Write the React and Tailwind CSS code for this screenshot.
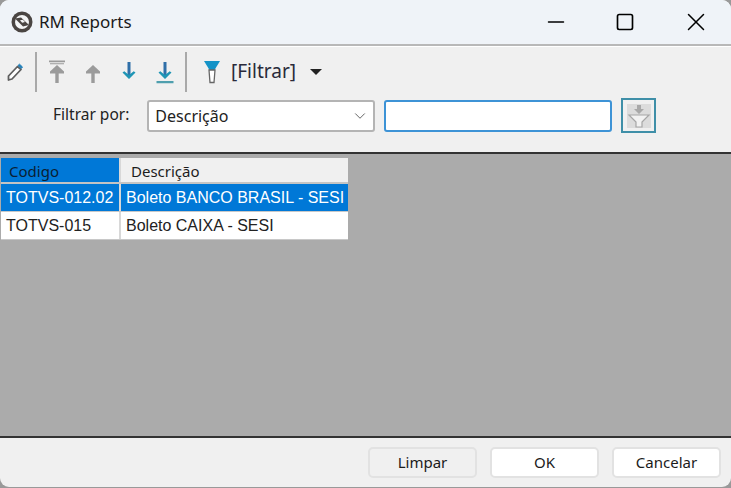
import { ChevronDown, Minus, Square, X } from 'lucide-react';

const SANS = "font-['Noto_Sans',sans-serif]";

const GrayArrow = ({ bar }) => (
  <svg width="20" height="24" viewBox="0 0 20 24" fill="#9b9b9b">
    {bar && <path d="M2 0.500h16v1.800H2zM3 3.200h14v1H3z" />}
    <path d="M8.300 12h3.400v11H8.300z" />
    <path d="M10 5l7 6.500v2H3v-2z" />
  </svg>
);

const BlueArrow = ({ bar }) => (
  <svg width="20" height="24" viewBox="0 0 20 24">
    <path d="M8.500 2h3v13h-3z" fill="#2f6fa8" />
    <path d="M3.500 12.500l6.500 6.500 6.500-6.500-1.800-1.200-4.700 3.800-4.700-3.800z" fill="#1f95b5" />
    {bar && <path d="M1.500 21h17v2.200h-17z" fill="#4f9fae" />}
  </svg>
);

const Logo = () => (
  <svg width="22" height="22" viewBox="0 0 22 22">
    <circle cx="11" cy="11" r="10.500" fill="#4a4543" />
    <circle cx="11" cy="11" r="7" fill="#f4f5f6" />
    <path d="M4 7.500l6-1 8 7.500-6 1.500z" fill="#4a4543" />
    <path d="M9 9.200l2.800-0.500 2.200 2.300-2.800 0.700z" fill="#f4f5f6" />
  </svg>
);

const Pencil = () => (
  <svg width="18" height="20" viewBox="0 0 18 20" fill="none">
    <path d="M2.500 14L11.500 4.500l3.500 3L6 17l-3.500 1z" fill="#fff" stroke="#5f5f5f" strokeWidth="1.800" strokeLinejoin="round" />
    <path d="M12 3.500l1.500-1.300 3 2.800-1.300 1.500z" fill="#2280ba" stroke="#2280ba" />
  </svg>
);

const Funnel = () => (
  <svg width="18" height="24" viewBox="0 0 18 24">
    <path d="M1 1h16l-5.500 9H6.500z" fill="#1593c7" />
    <path d="M6 10h6l-1 12.500H7z" fill="#fff" stroke="#666" strokeWidth="1.300" />
  </svg>
);

const FilterDown = () => (
  <svg width="24" height="24" viewBox="0 0 24 24">
    <rect width="24" height="24" fill="#dcdcdc" />
    <path d="M10 1h4v4h3l-5 5-5-5h3z" fill="#a8a8a8" />
    <path d="M2 11h20l-7 7v5H9v-5z" fill="#f2f2f2" stroke="#a6a6a6" strokeWidth="1.200" />
  </svg>
);

const Divider = () => <div className="w-0.5 h-10 bg-[#a9a9a9]" />;

const FooterButton = ({ children, muted }) => (
  <button className={`w-[109px] h-[31px] rounded-[5px] border-2 border-[#e2e2e2] text-[15px] text-[#1b1b1b] ${muted ? 'bg-[#f0f0f0]' : 'bg-white'}`}>
    {children}
  </button>
);

const Row = ({ code, name, selected }) => (
  <div className={`flex h-7 border-b border-[#c8c8c8] text-[16px] leading-7 font-['Liberation_Sans',sans-serif] ${selected ? 'bg-[#0078d7] text-white' : 'bg-white text-[#222]'}`}>
    <div className="w-[120px] pl-[5px] border-r-2 border-[#d8d8d8] whitespace-nowrap">{code}</div>
    <div className="w-[227px] pl-[5px] whitespace-nowrap">{name}</div>
  </div>
);

export default function App() {
  return (
    <div className={`w-[731px] h-[488px] overflow-hidden bg-[#999] ${SANS}`}>
      <div className="h-[487px] flex flex-col rounded-[9px] overflow-hidden bg-[#f0f0f0]">
        {/* Title bar */}
        <div className="h-[46px] shrink-0 flex items-center bg-[#eff3f8] border-b-2 border-[#b8b8b8] pl-[11px]">
          <Logo />
          <span className="ml-1.5 text-[17px] text-[#1a1a1a]">RM Reports</span>
          <div className="ml-auto flex items-center">
            <Minus size={26} strokeWidth={1.200} className="text-black mr-[46px]" />
            <Square size={20} strokeWidth={2} className="text-black mr-[46px]" />
            <X size={30} strokeWidth={1.200} className="text-black mr-[20px]" />
          </div>
        </div>

        {/* Toolbar */}
        <div className="h-[47px] shrink-0 flex items-center pt-[3px] border-t border-white">
          <div className="ml-[6px] mr-[11px]"><Pencil /></div>
          <Divider />
          <div className="ml-[10px] flex items-center gap-4">
            <GrayArrow bar />
            <GrayArrow />
            <BlueArrow />
            <BlueArrow bar />
          </div>
          <div className="ml-2.5"><Divider /></div>
          <div className="ml-4"><Funnel /></div>
          <span className="ml-2.5 text-[19px] text-[#2a2a3a]">[Filtrar]</span>
          <div className="ml-3.5 w-0 h-0 border-x-[6px] border-x-transparent border-t-[6px] border-t-[#222]" />
        </div>

        {/* Filter row */}
        <div className="h-[59px] shrink-0 flex items-start pt-[7px]">
          <span className="ml-[53px] mt-[3px] text-[15.500px] text-[#222]">Filtrar por:</span>
          <div className="ml-[18px] w-[228px] h-8 flex items-center justify-between bg-white border-2 border-[#b4b4b4] rounded-[3px] pl-1.5 pr-1 text-[16px] text-[#222]">
            Descrição
            <ChevronDown size={18} strokeWidth={1.200} className="text-[#555]" />
          </div>
          <div className="ml-[9px] w-[228px] h-8 bg-white border-2 border-[#3d93d6] rounded-[3px]" />
          <div className="ml-[9px] -mt-0.5 w-[35px] h-[35px] flex items-center justify-center border-2 border-[#3f8fa8] bg-[#f0f0f0]">
            <FilterDown />
          </div>
        </div>

        {/* Grid */}
        <div className="flex-1 min-h-0 bg-[#ababab] border-y-2 border-[#333] pt-1">
          <div className="w-[348px] pl-px">
            <div className="flex h-[26px] text-[15px] leading-[26px] text-[#1c1c1c] border-b-2 border-[#c4c4c4]">
              <div className="w-[120px] pl-2 bg-[#0078d7] text-[#0b1e33] border-r-2 border-[#d8d8d8]">Codigo</div>
              <div className="w-[227px] pl-2.5 bg-[#f0f0f0]">Descrição</div>
            </div>
            <Row code="TOTVS-012.02" name="Boleto BANCO BRASIL - SESI" selected />
            <Row code="TOTVS-015" name="Boleto CAIXA - SESI" />
          </div>
        </div>

        {/* Footer */}
        <div className="h-[49px] shrink-0 flex items-center justify-end gap-[13px] pr-2.5">
          <FooterButton muted>Limpar</FooterButton>
          <FooterButton>OK</FooterButton>
          <FooterButton>Cancelar</FooterButton>
        </div>
      </div>
    </div>
  );
}
